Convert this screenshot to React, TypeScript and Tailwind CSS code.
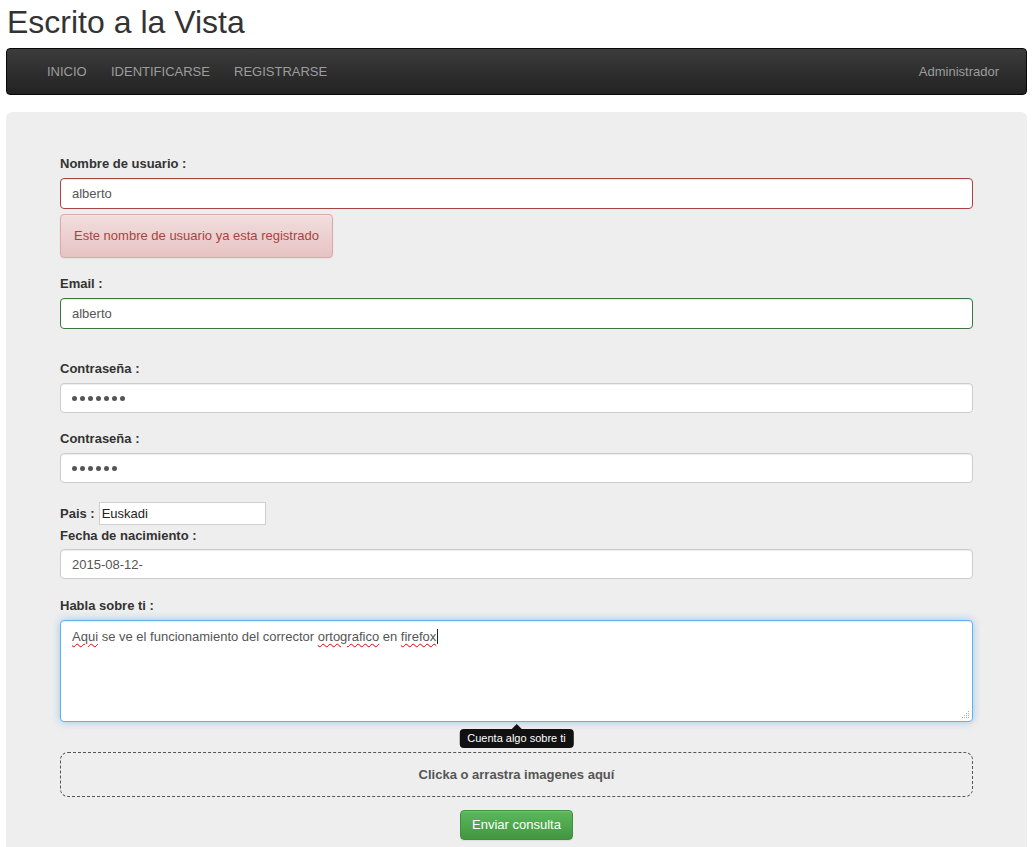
import React from "react";

function Label({ children, className = "" }: { children: React.ReactNode; className?: string }) {
  return <label className={`block font-bold leading-[18px] text-[#333] ${className}`}>{children}</label>;
}

const inputBase =
  "block w-full rounded-[4px] border bg-white px-[11px] text-[13px] text-[#555] shadow-[inset_0_1px_1px_rgba(0,0,0,0.075)] outline-none font-['Liberation_Sans',Arial,sans-serif]";

function PasswordBox({ count }: { count: number }) {
  return (
    <div className={`${inputBase} mb-0 flex h-[30px] items-center gap-[3px] border-[#cccccc]`}>
      {Array.from({ length: count }).map((_, i) => (
        <span key={i} className="h-[5px] w-[5px] rounded-full bg-[#555]" />
      ))}
    </div>
  );
}

function Grip() {
  return (
    <svg className="absolute bottom-[2px] right-[2px]" width="8" height="8" viewBox="0 0 8 8">
      <g fill="#b0b0b0">
        <rect x="6" y="0" width="1" height="1" />
        <rect x="4" y="2" width="1" height="1" />
        <rect x="6" y="2" width="1" height="1" />
        <rect x="2" y="4" width="1" height="1" />
        <rect x="4" y="4" width="1" height="1" />
        <rect x="6" y="4" width="1" height="1" />
        <rect x="0" y="6" width="1" height="1" />
        <rect x="2" y="6" width="1" height="1" />
        <rect x="4" y="6" width="1" height="1" />
        <rect x="6" y="6" width="1" height="1" />
      </g>
    </svg>
  );
}

const wavy = "underline decoration-wavy decoration-[#e00000] decoration-1 underline-offset-[2px]";

export default function App() {
  return (
    <div className="min-h-[847px] bg-white font-['Liberation_Sans',Arial,Helvetica,sans-serif] text-[13px] text-[#333]">
      <h1 className="pl-[7px] pt-[4px] text-[32px] font-normal leading-[36px] text-[#333]">Escrito a la Vista</h1>

      <nav className="ml-[6px] mr-[5px] mt-[8px] flex h-[47px] items-center rounded-[4px] border border-[#080808] bg-linear-to-b from-[#3c3c3c] to-[#222222] pl-[40px] pr-[27px] text-[13px] text-[#9d9d9d]">
        <a className="w-[64px]">INICIO</a>
        <a className="w-[123px]">IDENTIFICARSE</a>
        <a>REGISTRARSE</a>
        <a className="ml-auto">Administrador</a>
      </nav>

      <div className="ml-[6px] mr-[5px] mt-[17px] rounded-[6px] bg-[#eeeeee] px-[54px] pb-[40px] pt-[43px]">
        <Label className="mb-[5px]">Nombre de usuario :</Label>
        <input readOnly value="alberto" className={`${inputBase} h-[31px] border-[#a94442]`} />
        <div className="mt-[5px]">
          <div className="inline-block rounded-[4px] border border-[#dca7a7] bg-linear-to-b from-[#f2dede] to-[#e7c3c3] px-[13px] py-[12px] leading-[18px] text-[#a94442] shadow-[inset_0_1px_0_rgba(255,255,255,0.25),0_1px_2px_rgba(0,0,0,0.05)]">
            Este nombre de usuario ya esta registrado
          </div>
        </div>

        <Label className="mb-[5px] mt-[17px]">Email :</Label>
        <input readOnly value="alberto" className={`${inputBase} h-[31px] border-[#3c763d]`} />

        <Label className="mb-[5px] mt-[31px]">Contraseña :</Label>
        <PasswordBox count={7} />

        <Label className="mb-[5px] mt-[17px]">Contraseña :</Label>
        <PasswordBox count={6} />

        <div className="mt-[19px] flex h-[23px] items-center">
          <span className="font-bold">Pais :</span>
          <input
            readOnly
            value="Euskadi"
            className="ml-[4px] h-[23px] w-[167px] border border-[#cfcfcf] bg-white px-[2px] text-[13px] text-[#222] outline-none font-['Liberation_Sans',Arial,sans-serif]"
          />
        </div>

        <Label className="mb-[4px] mt-[2px]">Fecha de nacimiento :</Label>
        <input readOnly value="2015-08-12-" className={`${inputBase} h-[30px] border-[#cccccc]`} />

        <Label className="mb-[5px] mt-[18px]">Habla sobre ti :</Label>
        <div className="relative">
          <div className="relative h-[102px] w-full rounded-[4px] border border-[#66afe9] bg-white px-[11px] pt-[5px] leading-[18px] text-[#555] shadow-[inset_0_1px_1px_rgba(0,0,0,0.075),0_0_8px_rgba(102,175,233,0.6)]">
            <span className={wavy}>Aqui</span> se ve el funcionamiento del corrector{" "}
            <span className={wavy}>ortografico</span> en <span className={wavy}>firefox</span>
            <span className="ml-[1px] inline-block h-[15px] w-px translate-y-[3px] bg-[#222]" />
            <Grip />
          </div>
          <div className="absolute left-1/2 top-full mt-[7px] -translate-x-1/2">
            <div className="absolute -top-[5px] left-1/2 h-0 w-0 -translate-x-1/2 border-x-[5px] border-b-[5px] border-x-transparent border-b-[#111]" />
            <div className="h-[19px] whitespace-nowrap rounded-[4px] bg-[#111] px-[8px] text-[11px] leading-[19px] text-white">
              Cuenta algo sobre ti
            </div>
          </div>
        </div>

        <div className="mt-[30px] flex h-[45px] items-center justify-center rounded-[8px] border border-dashed border-[#555] font-bold text-[#555]">
          Clicka o arrastra imagenes aquí
        </div>

        <button className="mx-auto mt-[13px] block h-[30px] rounded-[4px] border border-[#3e8f3e] bg-linear-to-b from-[#5cb85c] to-[#419641] px-[11px] text-[13px] text-white shadow-[inset_0_1px_0_rgba(255,255,255,0.15),0_1px_1px_rgba(0,0,0,0.075)]">
          Enviar consulta
        </button>
      </div>
    </div>
  );
}
